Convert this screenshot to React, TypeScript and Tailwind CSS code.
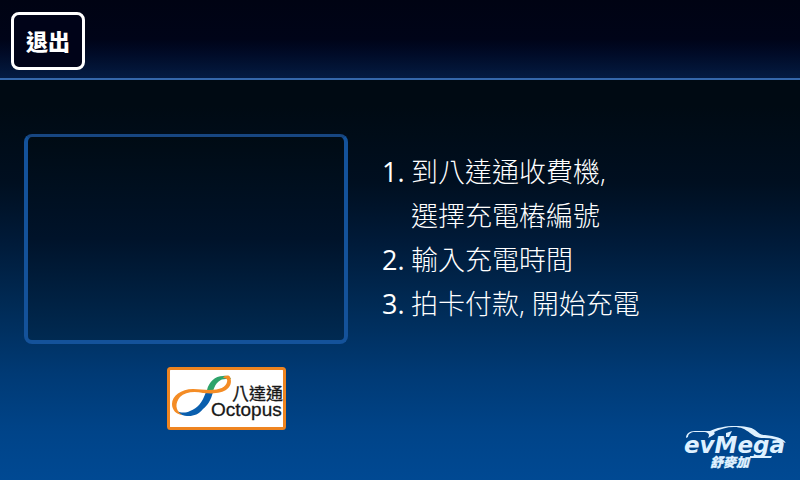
import React from "react";

const steps: { text: string; more?: string }[] = [
  { text: "到八達通收費機,", more: "選擇充電樁編號" },
  { text: "輸入充電時間" },
  { text: "拍卡付款, 開始充電" },
];

function OctopusLogo() {
  return (
    <svg viewBox="0 0 119 63" className="block h-[63px] w-[119px]" role="img" aria-label="八達通 Octopus">
      <rect x="1.5" y="1.5" width="116" height="60" rx="2" fill="#fff" stroke="#ee8420" strokeWidth="3" />
      <path d="M40 23C42 15 48 9 56 9C60 8 63 9 64 12L59 12C53 12 49 15 46 24Z" fill="#2ea36b" />
      <path d="M39 25L46 25C44 33 41 38 36 42C32 47 27 49 22 49C16 49 12 47 10 44C14 46 19 46 23 44C31 41 35 36 39 25Z" fill="#0a5fae" />
      <path
        d="M63 10C66 17 62 25 49 26C44 27 40 26 36 26C27 24 18 25 13 30C8 36 8 43 15 48C9 47 5 43 5 37C5 29 14 22 26 22C32 22 37 23 42 23C53 23 59 20 60 15C61 12 59 11 56 11C58 8 62 8 63 10Z"
        fill="#f48c25"
      />
      <text x="65" y="33" fill="#171717" stroke="#171717" strokeWidth="0.3" className="font-['Liberation_Sans','Noto_Sans_CJK_TC',sans-serif] text-[17px]">八達通</text>
      <text x="44" y="49" fill="#171717" stroke="#171717" strokeWidth="0.3" className="font-['Liberation_Sans',sans-serif] text-[19px]">Octopus</text>
    </svg>
  );
}

function EvMegaLogo() {
  return (
    <svg viewBox="0 -4 108 54" className="block h-[54px] w-[108px]" role="img" aria-label="evMega 舒麥加" fill="#dff1ff">
      <path d="M6 12C6 8 9 5 15 5L30 5C36 2 45 0 55 0C64 0 71 1 75 4C79 7 80 9 85 9C95 10 103 12 106 17C99 14 92 12 84 12C77 12 74 10 70 7C65 3 61 1 54 1C47 1 40 3 34 6C36 8 34 9 28 12C30 9 29 7 25 6L15 6C11 6 8 8 8 11Z" />
      <path d="M46 7L52 5L49 11L46 11Z" />
      <text x="4" y="27" className="font-['DejaVu_Sans',sans-serif] text-[23px] font-bold italic">evMega</text>
      <path d="M70 30L92 30L91 32L70 32Z" />
      <text x="30" y="41" stroke="#dff1ff" strokeWidth="0.3" className="font-['Liberation_Sans','Noto_Sans_CJK_TC',sans-serif] text-[13px] font-black italic">舒麥加</text>
    </svg>
  );
}

export default function App() {
  return (
    <div className="flex min-h-screen flex-col bg-[linear-gradient(to_bottom,#000a13_22%,#000f20_38%,#001a38_50%,#002b56_64%,#003a75_78%,#004489_90%,#004993_100%)] font-['Open_Sans','Noto_Sans_CJK_TC',sans-serif] text-white">
      <header className="flex h-20 shrink-0 items-center border-b-2 border-[#3567aa] bg-linear-to-b from-[#000313] via-[#000418] to-[#041b42] px-[11px] pt-1">
        <button type="button" className="h-[58px] w-[74px] rounded-lg border-3 border-white bg-[#000318] text-[22px] font-black">
          退出
        </button>
      </header>
      <main className="flex flex-1 items-start gap-[34px] pt-[54px] pl-6">
        <div className="flex w-[324px] shrink-0 flex-col items-center gap-[23px]">
          <div className="h-[210px] w-full rounded-lg border-4 border-t-3 border-[#14529a] border-t-[#174681] bg-[linear-gradient(to_bottom,#000b14,#00132a_50%,#002a52)]" />
          <div className="ml-20">
            <OctopusLogo />
          </div>
        </div>
        <ol className="flex-1 pt-4 text-[27px] leading-[44px] font-light">
          {steps.map((step, i) => (
            <li key={step.text} className="flex">
              <span className="w-[29px] shrink-0 font-normal">{i + 1}.</span>
              <span>
                {step.text}
                {step.more && <span className="block">{step.more}</span>}
              </span>
            </li>
          ))}
        </ol>
      </main>
      <footer className="-mt-14 flex justify-end pr-3 pb-1">
        <EvMegaLogo />
      </footer>
    </div>
  );
}
